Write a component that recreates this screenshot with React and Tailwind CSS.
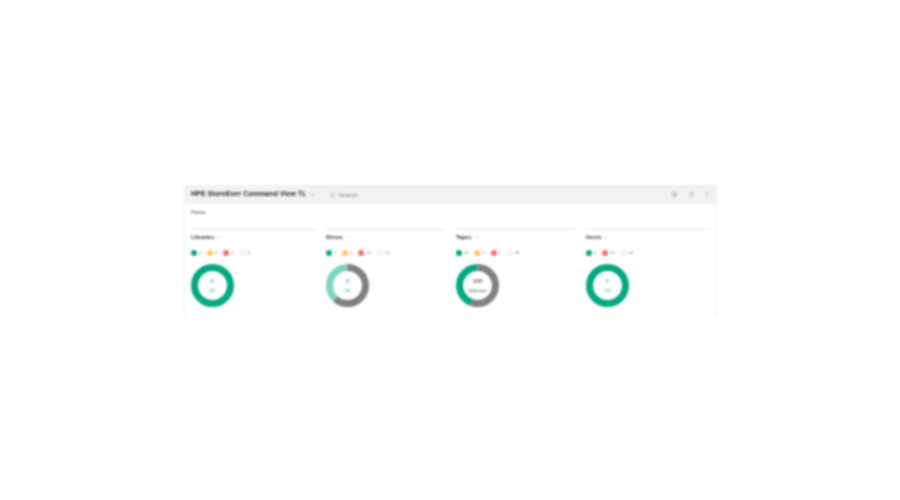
import React from 'react';
import { ChevronDown, Search, Settings, User } from 'lucide-react';

const GREEN = '#01a982';
const LIGHT = '#7fd4c0';
const GRAY = '#808080';

const columns = [
  {
    title: 'Libraries',
    width: 'w-[135px]',
    rule: 'w-[125px]',
    legend: [['#01a982', '4'], ['#ffc95e', '0'], ['#ff6b6b', '0'], ['#ffffff', '0']],
    ring: [[1, GREEN]],
    center: ['0', 'OK'],
    centerColor: 'text-[#4fc4a8]',
  },
  {
    title: 'Drives',
    width: 'w-[130px]',
    rule: 'w-[119px]',
    legend: [['#01a982', '4'], ['#ffc95e', '0'], ['#ff6b6b', '10'], ['#ffffff', '14']],
    ring: [[0.38, LIGHT], [0.62, GRAY]],
    flip: true,
    center: ['8', 'OK'],
    centerColor: 'text-[#4fc4a8]',
  },
  {
    title: 'Tapes',
    width: 'w-[130px]',
    rule: 'w-[119px]',
    legend: [['#01a982', '56'], ['#ffc95e', '0'], ['#ff6b6b', '1'], ['#ffffff', '48']],
    ring: [[0.44, GREEN], [0.56, GRAY]],
    flip: true,
    center: ['105', 'Unknown'],
    centerColor: 'text-[#666666]',
  },
  {
    title: 'Hosts',
    width: 'w-[124px]',
    rule: 'w-[124px]',
    legend: [['#01a982', '4'], ['#ff6b6b', '10'], ['#ffffff', '14']],
    ring: [[1, GREEN]],
    center: ['5', 'OK'],
    centerColor: 'text-[#4fc4a8]',
  },
];

// donut with the first slice running back from 12 o'clock when flip is set
const Donut = ({ ring, flip }) => {
  const c = 2 * Math.PI * 18;
  let offset = 0;
  return (
    <svg width="43" height="43" viewBox="0 0 43 43" className={flip ? '-scale-x-100' : ''}>
      {ring.map(([part, color]) => {
        const dash = part * c;
        const el = (
          <circle
            key={color}
            cx="21.5"
            cy="21.5"
            r="18"
            fill="none"
            stroke={color}
            strokeWidth="7"
            strokeDasharray={`${dash} ${c - dash}`}
            strokeDashoffset={-offset}
            transform="rotate(-90 21.5 21.5)"
          />
        );
        offset += dash;
        return el;
      })}
    </svg>
  );
};

const Column = ({ title, width, rule, legend, ring, flip, center, centerColor }) => (
  <div className={`${width} shrink-0`}>
    <div className={`${rule} border-t border-[#e4e4e4] pt-[3px]`}>
      <div className="flex items-center gap-[2px] text-[5.5px] leading-[8px] font-bold text-[#333333]">
        {title}
        <ChevronDown size={5} className="text-[#888888]" />
      </div>
    </div>
    <div className="mt-[9px] flex items-center gap-[6px]">
      {legend.map(([color, n], i) => (
        <div key={i} className="flex items-center gap-[2px]">
          <span
            className={`w-[6px] h-[6px] rounded-full ${color === '#ffffff' ? 'border border-[#dddddd]' : ''}`}
            style={{ backgroundColor: color }}
          />
          <span className="text-[4px] leading-[6px] text-[#777777]">{n}</span>
        </div>
      ))}
    </div>
    <div className="relative mt-[8px] w-[43px] h-[43px]">
      <Donut ring={ring} flip={flip} />
      <div className={`absolute inset-0 flex flex-col items-center justify-center gap-[3px] ${centerColor}`}>
        <span className="text-[6px] leading-[7px] font-bold">{center[0]}</span>
        <span className="text-[4px] leading-[5px] font-bold">{center[1]}</span>
      </div>
    </div>
  </div>
);

export default function App() {
  return (
    <div className="w-[900px] h-[500px] bg-white overflow-hidden pt-[185px] pl-[184px] font-['Liberation_Sans',sans-serif]">
      <div className="w-[533px] h-[131px] border-x border-[#e8f4f6] blur-[0.8px] overflow-hidden">
        <div className="h-[19px] bg-[#f2f2f2] flex items-center pl-[6px] pr-[6px]">
          <span className="text-[7.1px] font-bold text-[#333333] leading-none">HPE StoreEver Command View TL</span>
          <ChevronDown size={7} className="ml-[3px] text-[#777777]" />
          <div className="ml-[13px] flex items-center gap-[3px] text-[#888888]">
            <Search size={6} />
            <span className="text-[6px] leading-none">Search</span>
          </div>
          <div className="ml-auto flex items-center gap-[10px] text-[#999999]">
            <Settings size={7} />
            <User size={7} />
            <span className="text-[7px] leading-none w-[5px]">?</span>
          </div>
        </div>
        <div className="px-[6px] pt-[4px] h-[25px] text-[5.5px] leading-[8px] text-[#444444]">Home</div>
        <div className="flex pl-[6px]">
          {columns.map((col) => (
            <Column key={col.title} {...col} />
          ))}
        </div>
      </div>
    </div>
  );
}
